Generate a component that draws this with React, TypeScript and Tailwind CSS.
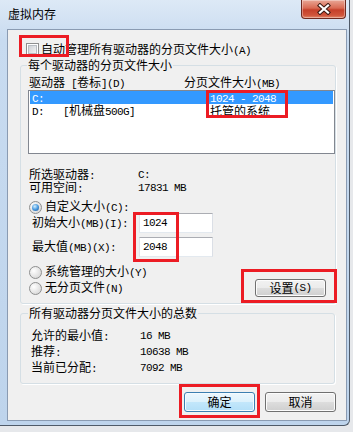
import React from "react";

const ASCII = /^[\x20-\x7e]+$/;

// SimSun-like: latin runs are half-width mono
const T = ({ s }: { s: string }) => (
  <>
    {s
      .split(/([\x20-\x7e]+)/)
      .filter(Boolean)
      .map((p, i) =>
        ASCII.test(p) ? (
          <span key={i} className="inline-block font-['Liberation_Mono',monospace] text-[11px] tracking-[-0.6px] whitespace-pre">
            {p}
          </span>
        ) : (
          <span key={i} className="inline-block">
            {p}
          </span>
        )
      )}
  </>
);

const Radio = ({ on }: { on?: boolean }) => (
  <span className="w-[13px] h-[13px] rounded-full border border-[#8e8f8f] bg-[radial-gradient(circle_at_35%_35%,#ffffff,#e2e2e2_60%,#cfcfcf)] flex items-center justify-center shrink-0">
    {on && (
      <span className="w-[7px] h-[7px] rounded-full bg-[radial-gradient(circle_at_40%_35%,#d4eefc,#4a9be0_50%,#1b4f8e)]" />
    )}
  </span>
);

const Check = () => (
  <span className="w-[13px] h-[13px] border border-[#8e8f8f] bg-white p-[1px] shrink-0 flex">
    <span className="flex-1 border border-[#b9bec4] bg-[linear-gradient(135deg,#cdd1d6,#f5f5f5)]" />
  </span>
);

const Field = ({ value }: { value: string }) => (
  <div className="w-[74px] h-[20px] border border-[#abadb3] border-l-[#e2e3ea] border-r-[#dbdfe6] border-b-[#e3e9ef] bg-white flex items-center pl-[3px]">
    <T s={value} />
  </div>
);

const Legend = ({ text, indent }: { text: string; indent: string }) => (
  <legend className={indent + " px-[1px] leading-[14px]"}>{text}</legend>
);

export default function App() {
  return (
    <div className="w-[353px] h-[432px] relative overflow-hidden bg-[#e6e8eb] font-['Noto_Sans_CJK_SC','Noto_Sans',sans-serif] text-[12px] leading-[14px] text-black">
      {/* window */}
      <div className="w-[350px] h-[426px] flex flex-col bg-[linear-gradient(to_bottom,#dde9f6,#c8dbf0_40px,#bed4ec)] border-r border-b border-[#4f5a68] rounded-br-[6px] pl-[7px] pr-[2px] pb-[4px]">
        {/* title bar */}
        <div className="h-[29px] shrink-0 flex items-start -ml-[7px] -mr-[2px]">
          <div className="pl-[8px] pt-[7px]">虚拟内存</div>
          <div className="ml-auto mr-[3px] w-[45px] h-[19px] rounded-b-[4px] border border-t-0 border-[#6e2a20] bg-[linear-gradient(to_bottom,#e9a796,#d96a53_45%,#c5402a_55%,#d0553b_85%,#e28a6c)] flex items-center justify-center shadow-[inset_0_0_0_1px_rgba(255,255,255,0.35)]">
            <svg width="14" height="12" viewBox="0 0 14 12">
              <path d="M3 2.5 L11 9.5 M11 2.5 L3 9.5" stroke="#3d1a12" strokeWidth="4.2" strokeLinecap="square" fill="none" />
              <path d="M3 2.5 L11 9.5 M11 2.5 L3 9.5" stroke="#ffffff" strokeWidth="2.2" strokeLinecap="square" fill="none" />
            </svg>
          </div>
        </div>

        {/* client */}
        <div className="flex-1 flex flex-col border border-[#8a9bb2] bg-[#f0f0f0]">
          <div className="mt-[13px] h-[13px] pl-[18px] flex items-center gap-[2px] leading-[12px]">
            <Check />
            <span>
              <T s="自动管理所有驱动器的分页文件大小(A)" />
            </span>
          </div>

          {/* per-drive group */}
          <fieldset className="mt-[2px] ml-[12px] w-[316px] border border-[#d5dfe5] rounded-[3px] pb-[6px] shadow-[1px_1px_0_#fff]">
            <Legend text="每个驱动器的分页文件大小" indent="ml-[6px]" />
            <div className="mt-[4px] h-[14px] flex items-center pl-[8px]">
              <span className="w-[155px]">
                <T s="驱动器 [卷标](D)" />
              </span>
              <span>
                <T s="分页文件大小(MB)" />
              </span>
            </div>
            <div className="ml-[7px] w-[307px] h-[64px] border border-[#828790] bg-white px-[1px] leading-[12px]">
              <div className="h-[13px] flex items-center pl-[2px] bg-[#3399ff] text-white">
                <span className="w-[178px]">
                  <T s="C:" />
                </span>
                <span>
                  <T s="1024 - 2048" />
                </span>
              </div>
              <div className="h-[13px] flex items-center pl-[2px]">
                <span className="w-[31px]">
                  <T s="D:" />
                </span>
                <span className="w-[147px]">
                  <T s="[机械盘500G]" />
                </span>
                <span>托管的系统</span>
              </div>
            </div>

            <div className="mt-[14px] h-[13px] flex items-center pl-[8px] leading-[12px]">
              <span className="w-[109px]">
                <T s="所选驱动器:" />
              </span>
              <T s="C:" />
            </div>
            <div className="h-[13px] flex items-center pl-[8px] leading-[12px]">
              <span className="w-[109px]">
                <T s="可用空间:" />
              </span>
              <T s="17831 MB" />
            </div>

            <div className="mt-[7px] h-[12px] flex items-center pl-[8px] gap-[3px] leading-[12px]">
              <Radio on />
              <span>
                <T s="自定义大小(C):" />
              </span>
            </div>
            <div className="h-[20px] flex items-center pl-[11px]">
              <span className="w-[107px]">
                <T s="初始大小(MB)(I):" />
              </span>
              <Field value="1024" />
            </div>
            <div className="mt-[4px] h-[20px] flex items-center pl-[11px]">
              <span className="w-[107px]">
                <T s="最大值(MB)(X):" />
              </span>
              <Field value="2048" />
            </div>
            <div className="mt-[8px] h-[14px] flex items-center pl-[8px] gap-[3px]">
              <Radio />
              <span>
                <T s="系统管理的大小(Y)" />
              </span>
            </div>
            <div className="h-[18px] flex items-center pl-[8px] gap-[3px]">
              <Radio />
              <span>
                <T s="无分页文件(N)" />
              </span>
              <button className="ml-auto mr-[9px] w-[71px] h-[18px] rounded-[3px] border border-[#707070] bg-[linear-gradient(to_bottom,#f2f2f2,#ebebeb_50%,#dddddd_50%,#cfcfcf)] flex items-center justify-center shadow-[inset_0_0_0_1px_#fcfcfc]">
                <T s="设置(S)" />
              </button>
            </div>
          </fieldset>

          {/* totals group */}
          <fieldset className="mt-[2px] ml-[12px] w-[315px] border border-[#d5dfe5] rounded-[3px] pb-[7px] shadow-[1px_1px_0_#fff]">
            <Legend text="所有驱动器分页文件大小的总数" indent="ml-[7px]" />
            <div className="mt-[8px] h-[16px] flex items-center pl-[10px]">
              <span className="w-[109px]">
                <T s="允许的最小值:" />
              </span>
              <T s="16 MB" />
            </div>
            <div className="h-[16px] flex items-center pl-[10px]">
              <span className="w-[109px]">
                <T s="推荐:" />
              </span>
              <T s="10638 MB" />
            </div>
            <div className="h-[16px] flex items-center pl-[10px]">
              <span className="w-[109px]">
                <T s="当前已分配:" />
              </span>
              <T s="7092 MB" />
            </div>
          </fieldset>

          <div className="mt-[8px] flex justify-end gap-[10px] pr-[10px]">
            <button className="w-[71px] h-[20px] rounded-[3px] border border-[#3c7fb1] bg-[linear-gradient(to_bottom,#ecf7fd,#dcf1fc_50%,#c3e7fb_50%,#b3dff8)] flex items-center justify-center shadow-[inset_0_0_0_1px_#f4fbff]">
              确定
            </button>
            <button className="w-[71px] h-[20px] rounded-[3px] border border-[#707070] bg-[linear-gradient(to_bottom,#f2f2f2,#ebebeb_50%,#dddddd_50%,#cfcfcf)] flex items-center justify-center shadow-[inset_0_0_0_1px_#fcfcfc]">
              取消
            </button>
          </div>
        </div>
      </div>

      {/* red annotation boxes */}
      <div className="absolute left-[19px] top-[35px] w-[50px] h-[22px] border-[3px] border-[#ec1c24]" />
      <div className="absolute left-[206px] top-[90px] w-[82px] h-[28px] border-[3px] border-[#ec1c24]" />
      <div className="absolute left-[133px] top-[212px] w-[46px] h-[50px] border-[3px] border-[#ec1c24]" />
      <div className="absolute left-[241px] top-[269px] w-[96px] h-[34px] border-[3px] border-[#ec1c24]" />
      <div className="absolute left-[179px] top-[384px] w-[81px] h-[34px] border-[3px] border-[#ec1c24]" />
    </div>
  );
}
